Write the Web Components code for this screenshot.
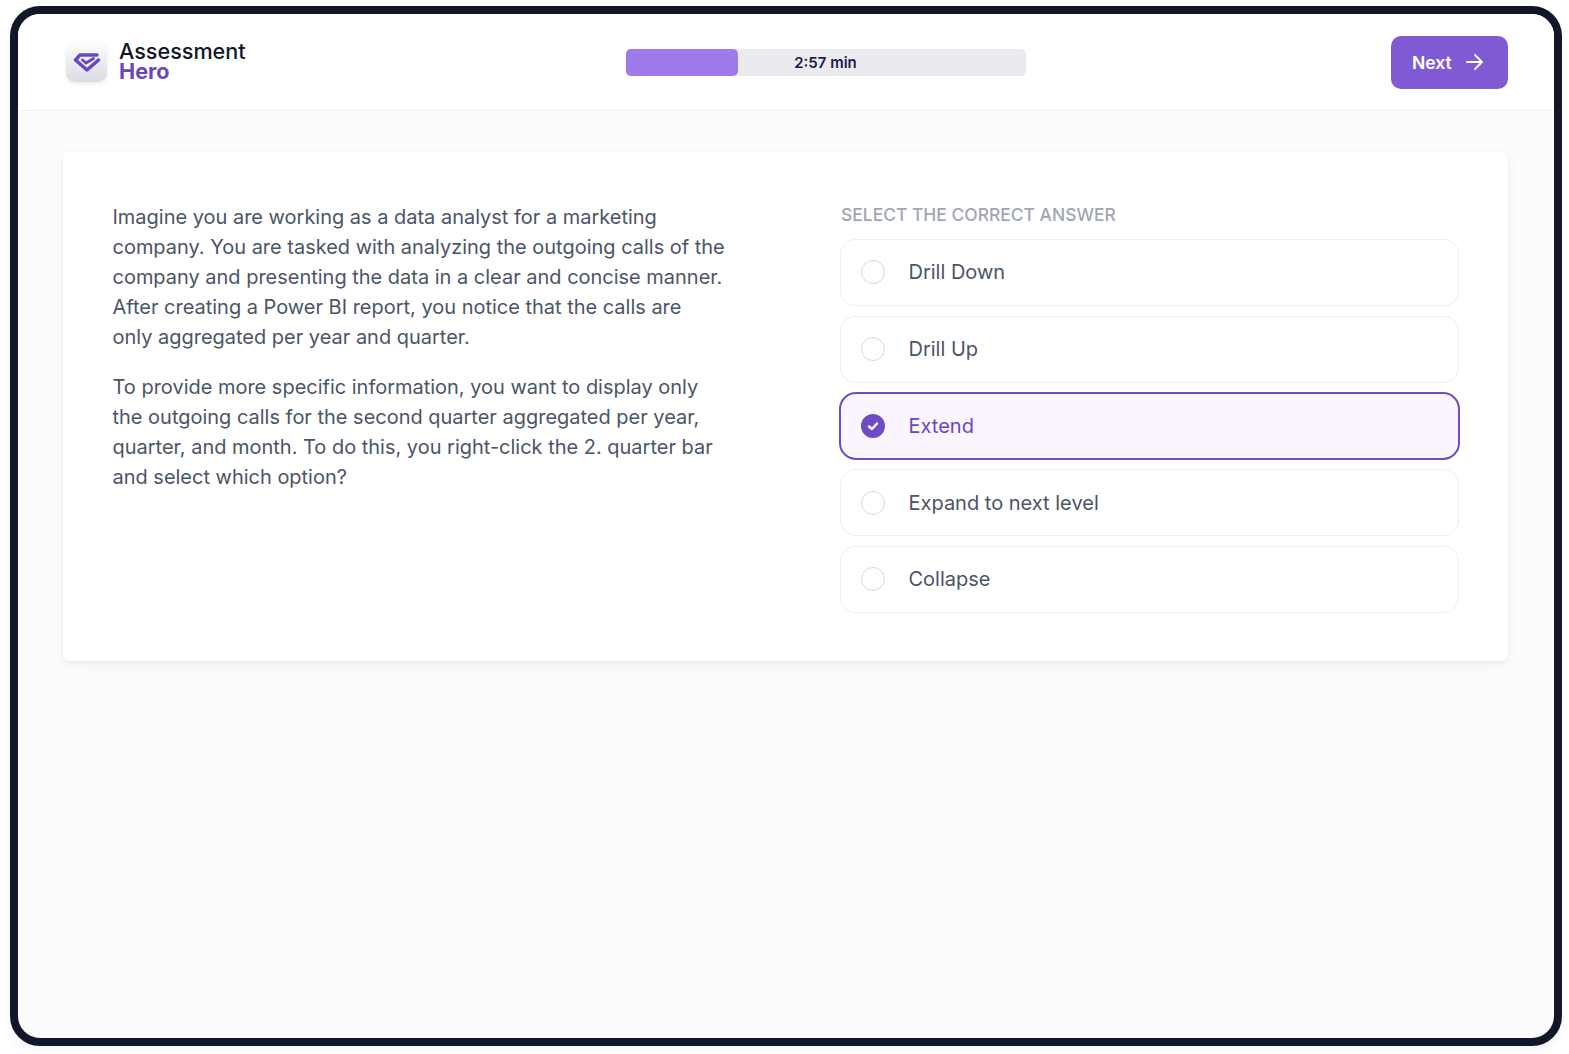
<!DOCTYPE html>
<html lang="en">
<head>
<meta charset="utf-8">
<title>Assessment Hero</title>
<style>
  html, body { margin: 0; height: 100%; background: #fff; }
  body { font-family: Inter, "Liberation Sans", sans-serif; }
</style>
</head>
<body>
<quiz-app>
  <quiz-header slot="header"></quiz-header>
  <quiz-card>
    <p>Imagine you are working as a data analyst for a marketing company. You are tasked with analyzing the outgoing calls of the company and presenting the data in a clear and concise manner. After creating a Power BI report, you notice that the calls are only aggregated per year and quarter.</p>
    <p>To provide more specific information, you want to display only the outgoing calls for the second quarter aggregated per year, quarter, and month. To do this, you right-click the 2. quarter bar and select which option?</p>
    <quiz-option slot="options">Drill Down</quiz-option>
    <quiz-option slot="options">Drill Up</quiz-option>
    <quiz-option slot="options" selected>Extend</quiz-option>
    <quiz-option slot="options">Expand to next level</quiz-option>
    <quiz-option slot="options">Collapse</quiz-option>
  </quiz-card>
</quiz-app>

<script>
// Device frame + page background
class QuizApp extends HTMLElement {
  connectedCallback() {
    if (this.shadowRoot) return;
    this.attachShadow({ mode: 'open' }).innerHTML = `
      <style>
        :host { display: block; box-sizing: border-box; height: 1054px; padding: 6px 7px 8px 10px; }
        .frame {
          box-sizing: border-box;
          height: 100%;
          border: 8px solid #111729;
          border-radius: 30px;
          background: #fcfcfd;
          overflow: hidden;
          box-shadow: 0 6px 10px rgba(17, 23, 41, .04);
        }
        main { padding: 41px 46px 0 45px; }
      </style>
      <div class="frame">
        <slot name="header"></slot>
        <main><slot></slot></main>
      </div>`;
  }
}

class QuizHeader extends HTMLElement {
  connectedCallback() {
    if (this.shadowRoot) return;
    this.attachShadow({ mode: 'open' }).innerHTML = `
      <style>
        :host {
          display: flex;
          align-items: center;
          justify-content: space-between;
          box-sizing: border-box;
          height: 97px;
          padding: 0 46px 0 48px;
          background: #fff;
          border-bottom: 1px solid #f0f1f3;
        }
        .brand { display: flex; align-items: center; gap: 12px; width: 194px; margin-top: -1px; }
        .mark {
          width: 41px; height: 40px;
          border-radius: 9px;
          background: linear-gradient(180deg, #fdfdfe 0%, #d9dbe1 100%);
          box-shadow: 0 2px 4px rgba(17, 23, 41, .08);
          display: flex; align-items: center; justify-content: center;
        }
        .name { font-size: 21.6px; font-weight: 500; line-height: 20px; color: #111729; margin-top: -1px; }
        .name b { display: block; font-weight: 700; color: #6b46c1; line-height: 20px; }
        .timer {
          position: relative;
          width: 400px; height: 27px;
          border-radius: 5px;
          background: #e9ebee;
          display: flex; align-items: center; justify-content: center;
          font-size: 15px; font-weight: 600; color: #1f1b4d;
        }
        .fill {
          position: absolute; left: 0; top: 0; bottom: 0;
          width: 112px;
          border-radius: 5px;
          background: #9f7aea;
        }
        .timer span { position: relative; }
        button {
          display: flex; align-items: center; gap: 14px;
          box-sizing: border-box;
          width: 117px; height: 53px;
          padding: 0 0 0 21px;
          border: none;
          border-radius: 10px;
          background: #805ad5;
          color: #fff;
          font: 600 17.5px Inter, "Liberation Sans", sans-serif;
        }
      </style>
      <div class="brand">
        <div class="mark">
          <svg width="28" height="20" viewBox="0 0 28 20" fill="none" stroke="#6b46c1" stroke-width="3.4" stroke-linejoin="round" stroke-linecap="round">
            <path d="M24 3 H7 L2.5 8 L14 18 L25.5 8"/>
            <path d="M9.5 8 L13 11 L20.5 6.5" stroke-width="2.8"/>
          </svg>
        </div>
        <div class="name">Assessment<b>Hero</b></div>
      </div>
      <div class="timer"><div class="fill"></div><span>2:57 min</span></div>
      <button type="button">Next
        <svg width="17" height="18" viewBox="0 0 17 18" fill="none" stroke="#fff" stroke-width="1.8" stroke-linecap="round" stroke-linejoin="round">
          <path d="M1 9 H16 M9 2 L16 9 L9 16"/>
        </svg>
      </button>`;
  }
}

class QuizCard extends HTMLElement {
  connectedCallback() {
    if (this.shadowRoot) return;
    this.attachShadow({ mode: 'open' }).innerHTML = `
      <style>
        :host {
          display: grid;
          grid-template-columns: 618px 619px;
          column-gap: 110px;
          box-sizing: border-box;
          height: 509px;
          padding: 50px 0 0 49px;
          background: #fff;
          border-radius: 6px;
          box-shadow: 0 1px 3px rgba(17, 23, 41, .06), 0 4px 14px rgba(17, 23, 41, .05);
        }
        .question { font-size: 19.98px; line-height: 30px; color: #4a5568; padding: 0 4px 0 .5px; }
        ::slotted(p) { margin: 0 0 20px; }
        .label {
          font-size: 17.45px; font-weight: 500; line-height: 26px;
          color: #a0a6b4;
          text-transform: uppercase;
          margin: 0 0 11px 1px;
        }
        .options { display: flex; flex-direction: column; gap: 10px; }
      </style>
      <div class="question"><slot></slot></div>
      <div>
        <div class="label">Select the correct answer</div>
        <div class="options"><slot name="options"></slot></div>
      </div>`;
  }
}

class QuizOption extends HTMLElement {
  connectedCallback() {
    if (this.shadowRoot) return;
    this.attachShadow({ mode: 'open' }).innerHTML = `
      <style>
        :host {
          display: flex; align-items: center; gap: 24px;
          box-sizing: border-box;
          height: 66.75px;
          padding: 0 20px;
          border: 1px solid #edeef1;
          border-radius: 15px;
          background: #fff;
          font-size: 20px;
          color: #4a5568;
        }
        :host([selected]) {
          height: 68.75px;
          margin: -1px;
          border: 2.5px solid #6f4bc4;
          border-radius: 17px;
          padding: 0 20px 0 20px;
          background: #faf5ff;
          color: #6b46c1;
        }
        .radio {
          box-sizing: border-box;
          width: 24px; height: 24px;
          border: 1.5px solid #d5d7dc;
          border-radius: 50%;
          background: #fff;
          display: flex; align-items: center; justify-content: center;
          margin-right: -.5px;
        }
        :host([selected]) .radio { border: none; background: #6f4bc4; }
        svg { display: none; }
        :host([selected]) svg { display: block; }
      </style>
      <span class="radio">
        <svg width="14" height="14" viewBox="0 0 14 14" fill="none" stroke="#fff" stroke-width="2.4" stroke-linecap="round" stroke-linejoin="round">
          <path d="M3 7.5 L6 10 L11 4.5"/>
        </svg>
      </span>
      <span><slot></slot></span>`;
  }
}

customElements.define('quiz-app', QuizApp);
customElements.define('quiz-header', QuizHeader);
customElements.define('quiz-card', QuizCard);
customElements.define('quiz-option', QuizOption);
</script>
</body>
</html>
